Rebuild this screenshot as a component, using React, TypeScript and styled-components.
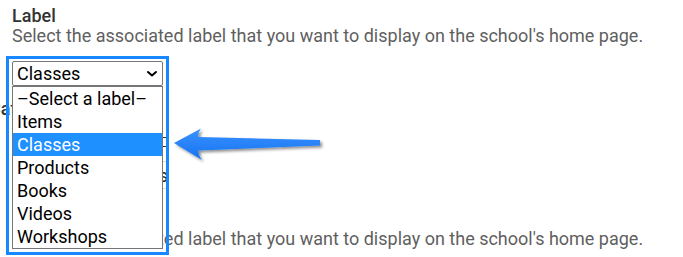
import React from "react";
import styled, { createGlobalStyle } from "styled-components";

const GlobalStyle = createGlobalStyle`
  html, body {
    margin: 0;
    padding: 0;
    background: #ffffff;
    overflow: hidden;
  }
  body {
    font-family: Roboto, "Liberation Sans", Arial, sans-serif;
  }
`;

const Page = styled.div`
  position: relative;
  width: 683px;
  height: 257px;
  padding: 6px 12px 0;
  box-sizing: border-box;
  overflow: hidden;
`;

const Field = styled.section`
  display: flex;
  flex-direction: column;
  align-items: flex-start;
`;

const Heading = styled.h3<{ $shift?: number; $gap?: number }>`
  margin: ${(p) => p.$gap ?? 0}px 0 0 ${(p) => p.$shift ?? 0}px;
  font-size: 18px;
  line-height: 20px;
  font-weight: 500;
  color: #333333;
`;

const Help = styled.p<{ $gap?: number }>`
  margin: ${(p) => p.$gap ?? 0}px 0 0;
  font-size: 18px;
  line-height: 20px;
  color: #5f5f5f;
  white-space: nowrap;
`;

const SelectBox = styled.div`
  margin-top: 15px;
  width: 151px;
  height: 25px;
  box-sizing: border-box;
  border: 1px solid #767676;
  border-radius: 2px;
  display: flex;
  align-items: center;
  justify-content: space-between;
  padding: 0 4px;
  font-size: 18px;
  color: #000000;
  background: #ffffff;
`;

const GhostBox = styled.div<{ $top: number; $height: number; $line: string }>`
  margin-top: ${(p) => p.$top}px;
  width: 156px;
  height: ${(p) => p.$height}px;
  box-sizing: border-box;
  border-top: 1px solid ${(p) => p.$line};
  border-bottom: 1px solid ${(p) => p.$line};
  display: flex;
  align-items: center;
  justify-content: flex-end;
  font-size: 18px;
  color: #222222;
`;

const Frame = styled.div`
  position: absolute;
  left: 6px;
  top: 56px;
  width: 163px;
  height: 199px;
  box-sizing: border-box;
  border: 3.5px solid #1788ff;
  pointer-events: none;
`;

const Menu = styled.ul`
  position: absolute;
  left: 12px;
  top: 86px;
  width: 151px;
  margin: 0;
  padding: 0;
  list-style: none;
  box-sizing: border-box;
  border: 1px solid #767676;
  background: #ffffff;
`;

const Option = styled.li<{ $active?: boolean }>`
  height: 23px;
  line-height: 23px;
  padding-left: 4px;
  font-size: 18px;
  color: ${(p) => (p.$active ? "#ffffff" : "#000000")};
  background: ${(p) => (p.$active ? "#1e90ff" : "transparent")};
  white-space: nowrap;
`;

const Pointer = styled.svg`
  position: absolute;
  left: 170px;
  top: 124px;
  overflow: visible;
`;

const options = [
  "\u2013Select a label\u2013",
  "Items",
  "Classes",
  "Products",
  "Books",
  "Videos",
  "Workshops",
];

const helpText =
  "Select the associated label that you want to display on the school's home page.";

export default function App() {
  return (
    <>
      <GlobalStyle />
      <Page>
        <Field>
          <Heading>Label</Heading>
          <Help>{helpText}</Help>
          <SelectBox>
            <span>Classes</span>
            <svg width="12" height="8" viewBox="0 0 12 8">
              <path
                d="M2 2 L6 5.5 L10 2"
                fill="none"
                stroke="#000"
                strokeWidth="2"
                strokeLinecap="round"
                strokeLinejoin="round"
              />
            </svg>
          </SelectBox>
        </Field>

        <Field>
          <Heading $shift={-23} $gap={13}>
            Category
          </Heading>
          <GhostBox $top={18} $height={10} $line="#333333" />
          <GhostBox $top={14} $height={28} $line="#dddddd">
            Classes
          </GhostBox>
          <Help $gap={40}>{helpText}</Help>
        </Field>

        <Menu>
          {options.map((o) => (
            <Option key={o} $active={o === "Classes"}>
              {o}
            </Option>
          ))}
        </Menu>
        <Frame />

        <Pointer width="150" height="40" viewBox="0 0 150 40">
          <defs>
            <filter id="shade" x="-10%" y="-30%" width="130%" height="180%">
              <feDropShadow dx="2" dy="2" stdDeviation="1.6" floodColor="#000" floodOpacity="0.45" />
            </filter>
            <linearGradient id="fill" x1="0" y1="0" x2="0" y2="1">
              <stop offset="0" stopColor="#3a92ff" />
              <stop offset="1" stopColor="#1673f0" />
            </linearGradient>
          </defs>
          <path
            d="M4 19 L31 4.5 Q27.5 9 28.5 13 L150 16 L150 21.5 L28.5 26.5 Q28 31 32 36 Z"
            fill="url(#fill)"
            filter="url(#shade)"
          />
        </Pointer>
      </Page>
    </>
  );
}
